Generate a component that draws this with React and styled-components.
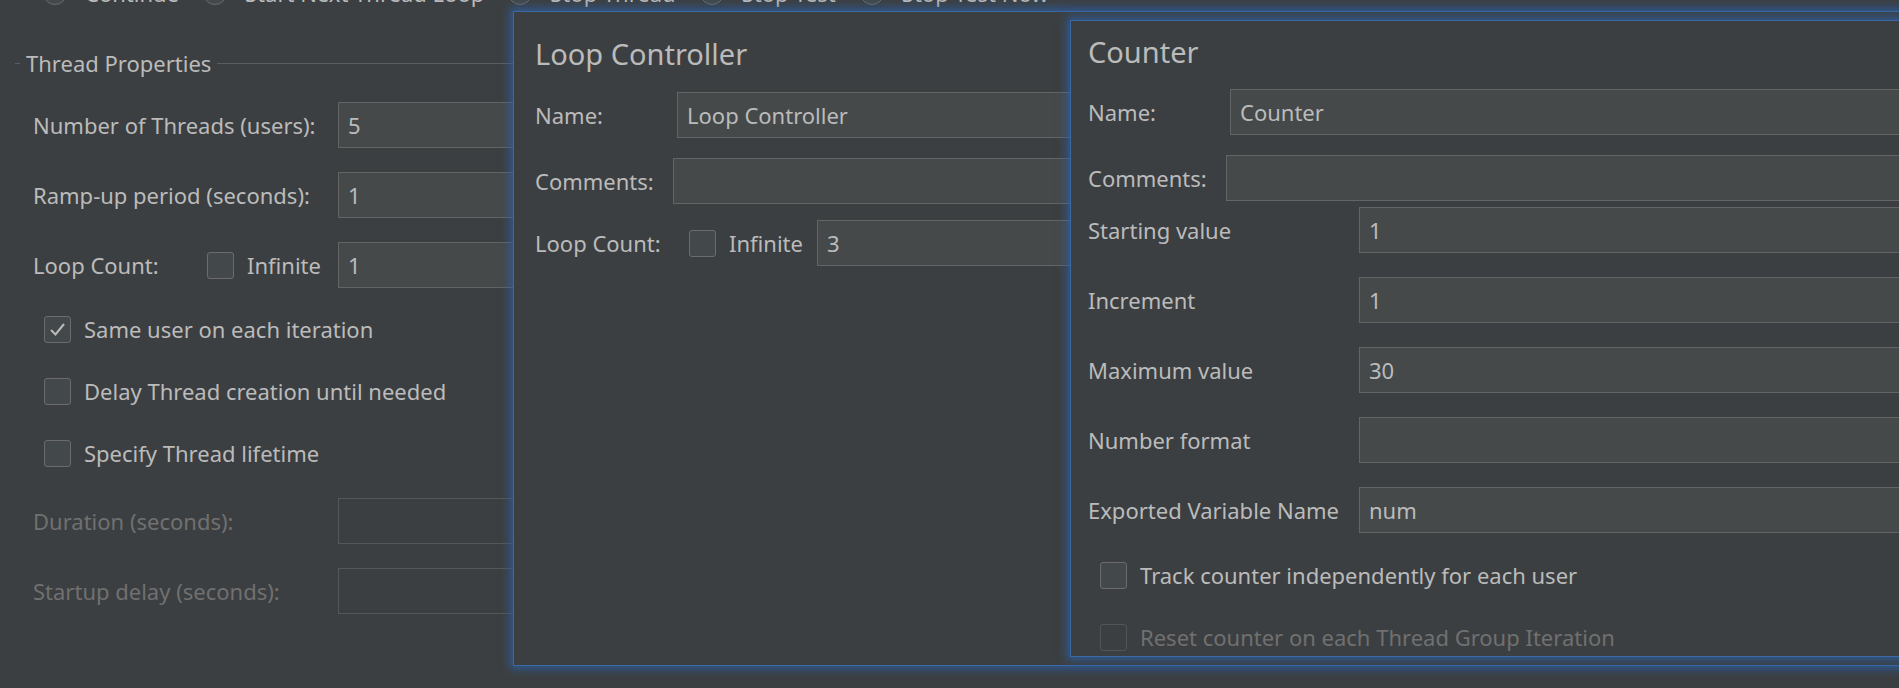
import React from 'react'
import styled, { createGlobalStyle } from 'styled-components'

const GlobalStyle = createGlobalStyle`
  html, body {
    margin: 0;
    padding: 0;
    background: #3c3f41;
  }
  body {
    font-family: "Noto Sans", "Open Sans", sans-serif;
    font-size: 22px;
    color: #bbbbbb;
    overflow: hidden;
  }
`

const Screen = styled.div`
  position: relative;
  width: 1899px;
  height: 688px;
  overflow: hidden;
  background: #3c3f41;
`

const Page = styled.div`
  display: flex;
  flex-direction: column;
  padding: 0 15px;
`

const RadioRow = styled.div`
  display: flex;
  align-items: center;
  gap: 24px;
  height: 26px;
  margin-top: -20px;
  padding-left: 28px;
  white-space: nowrap;
`

const RadioItem = styled.div`
  display: flex;
  align-items: center;
  gap: 18px;
`

const RadioDot = styled.span`
  width: 24px;
  height: 24px;
  box-sizing: border-box;
  border: 1px solid #6b6b6b;
  border-radius: 50%;
  background: #43494a;
`

const GroupHeader = styled.div`
  display: flex;
  align-items: center;
  gap: 6px;
  height: 30px;
  margin-top: 42px;

  &::before {
    content: '';
    width: 5px;
    border-top: 1px solid #5b5e60;
  }
  &::after {
    content: '';
    flex: 1;
    border-top: 1px solid #5b5e60;
  }
`

const Form = styled.div`
  display: flex;
  flex-direction: column;
  gap: ${p => p.$gap ?? 24}px;
  padding-left: ${p => p.$indent ?? 0}px;
  margin-top: ${p => p.$top ?? 0}px;
`

const Row = styled.div`
  display: flex;
  align-items: center;
  height: 46px;
  margin-top: ${p => p.$mt ?? 0}px;
`

const Label = styled.span`
  flex-shrink: 0;
  width: ${p => (p.$w ? `${p.$w}px` : 'auto')};
  color: ${p => (p.$disabled ? '#707070' : '#bbbbbb')};
  white-space: nowrap;
`

const TextBox = styled.input`
  flex: 1;
  min-width: 0;
  height: 46px;
  box-sizing: border-box;
  margin: 0 0 0 ${p => p.$ml ?? 0}px;
  padding: 0 9px;
  border: 1px solid ${p => (p.disabled ? '#555759' : '#646464')};
  background: ${p => (p.disabled ? '#3c3f41' : '#45494a')};
  color: #bbbbbb;
  font: inherit;
  outline: none;
`

const LoopCell = styled.div`
  display: flex;
  align-items: center;
  flex-shrink: 0;
  width: ${p => p.$w}px;
`

const InfiniteText = styled.span`
  margin-left: 13px;
  white-space: nowrap;
`

const CheckRow = styled.div`
  display: flex;
  align-items: center;
  gap: 13px;
  height: 38px;
  box-sizing: border-box;
  padding: 0 0 4px ${p => p.$indent ?? 11}px;
  margin-top: ${p => p.$mt ?? 0}px;
  color: ${p => (p.$disabled ? '#707070' : '#bbbbbb')};
  white-space: nowrap;
`

const Box = styled.span`
  display: inline-flex;
  align-items: center;
  justify-content: center;
  flex-shrink: 0;
  width: 27px;
  height: 27px;
  box-sizing: border-box;
  border: 1px solid ${p => (p.$disabled ? '#525456' : '#6b6b6b')};
  border-radius: 3px;
  background: ${p => (p.$disabled ? '#3c3f41' : '#43494a')};
`

const Window = styled.section`
  position: absolute;
  left: ${p => p.$left}px;
  top: ${p => p.$top}px;
  right: -60px;
  bottom: ${p => p.$bottom}px;
  box-sizing: border-box;
  display: flex;
  flex-direction: column;
  padding: ${p => p.$pad};
  background: #3c3f41;
  border: 1px solid #3a69a3;
  box-shadow: 0 0 9px 3px rgba(44, 98, 168, 0.8);
`

const Title = styled.h2`
  margin: 0;
  font-size: 29px;
  font-weight: 400;
  line-height: 36px;
  color: #bbbbbb;
`

function CheckBox({ checked, disabled }) {
  return (
    <Box $disabled={disabled}>
      {checked && (
        <svg width="17" height="15" viewBox="0 0 17 15">
          <polyline points="2,8 6.5,12.5 15,2" fill="none" stroke="#bbbbbb" strokeWidth="2" />
        </svg>
      )}
    </Box>
  )
}

const radios = ['Continue', 'Start Next Thread Loop', 'Stop Thread', 'Stop Test', 'Stop Test Now']

export default function App() {
  return (
    <Screen>
      <GlobalStyle />
      <Page>
        <RadioRow>
          {radios.map(r => (
            <RadioItem key={r}>
              <RadioDot />
              <span>{r}</span>
            </RadioItem>
          ))}
        </RadioRow>

        <GroupHeader>Thread Properties</GroupHeader>

        <Form $indent={18} $top={24}>
          <Row>
            <Label $w={305}>Number of Threads (users):</Label>
            <TextBox readOnly defaultValue="5" />
          </Row>
          <Row>
            <Label $w={305}>Ramp-up period (seconds):</Label>
            <TextBox readOnly defaultValue="1" />
          </Row>
          <Row>
            <LoopCell $w={305}>
              <Label $w={174}>Loop Count:</Label>
              <CheckBox />
              <InfiniteText>Infinite</InfiniteText>
            </LoopCell>
            <TextBox readOnly defaultValue="1" />
          </Row>
          <CheckRow>
            <CheckBox checked />
            Same user on each iteration
          </CheckRow>
          <CheckRow>
            <CheckBox />
            Delay Thread creation until needed
          </CheckRow>
          <CheckRow>
            <CheckBox />
            Specify Thread lifetime
          </CheckRow>
          <Row>
            <Label $w={305} $disabled>Duration (seconds):</Label>
            <TextBox disabled />
          </Row>
          <Row>
            <Label $w={305} $disabled>Startup delay (seconds):</Label>
            <TextBox disabled />
          </Row>
        </Form>
      </Page>

      <Window $left={513} $top={11} $bottom={22} $pad="24px 0 0 21px">
        <Title>Loop Controller</Title>
        <Form $top={20} $gap={20}>
          <Row>
            <Label $w={142}>Name:</Label>
            <TextBox readOnly defaultValue="Loop Controller" />
          </Row>
          <Row>
            <Label $w={138}>Comments:</Label>
            <TextBox readOnly defaultValue="" />
          </Row>
          <Row $mt={-4}>
            <LoopCell $w={267}>
              <Label $w={154}>Loop Count:</Label>
              <CheckBox />
              <InfiniteText>Infinite</InfiniteText>
            </LoopCell>
            <TextBox readOnly defaultValue="3" $ml={15} />
          </Row>
        </Form>
      </Window>

      <Window $left={1070} $top={20} $bottom={31} $pad="13px 0 0 17px">
        <Title>Counter</Title>
        <Form $top={19} $gap={24}>
          <Row>
            <Label $w={142}>Name:</Label>
            <TextBox readOnly defaultValue="Counter" />
          </Row>
          <Row $mt={-4}>
            <Label $w={138}>Comments:</Label>
            <TextBox readOnly defaultValue="" />
          </Row>
          <Row $mt={-18}>
            <Label $w={271}>Starting value</Label>
            <TextBox readOnly defaultValue="1" />
          </Row>
          <Row>
            <Label $w={271}>Increment</Label>
            <TextBox readOnly defaultValue="1" />
          </Row>
          <Row>
            <Label $w={271}>Maximum value</Label>
            <TextBox readOnly defaultValue="30" />
          </Row>
          <Row>
            <Label $w={271}>Number format</Label>
            <TextBox readOnly defaultValue="" />
          </Row>
          <Row>
            <Label $w={271}>Exported Variable Name</Label>
            <TextBox readOnly defaultValue="num" />
          </Row>
          <CheckRow $indent={12} $mt={1}>
            <CheckBox />
            Track counter independently for each user
          </CheckRow>
          <CheckRow $indent={12} $disabled>
            <CheckBox disabled />
            Reset counter on each Thread Group Iteration
          </CheckRow>
        </Form>
      </Window>
    </Screen>
  )
}
